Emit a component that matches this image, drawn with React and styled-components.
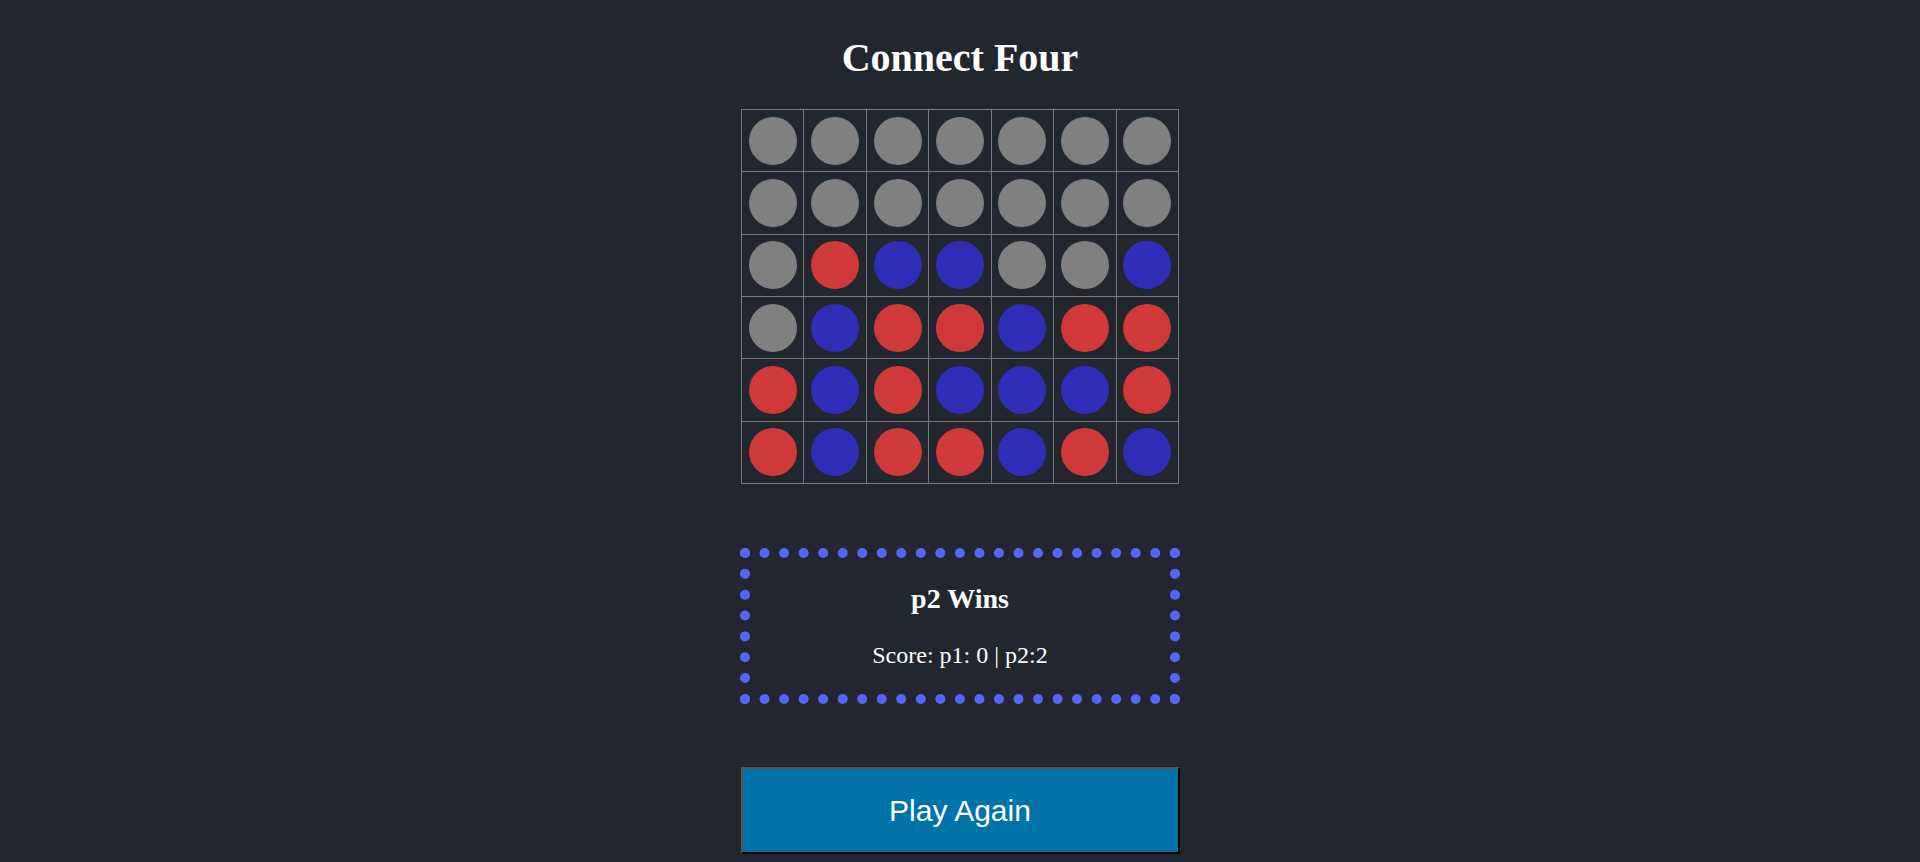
import React from 'react'
import styled, { createGlobalStyle } from 'styled-components'

const GlobalStyle = createGlobalStyle`
  html, body {
    margin: 0;
    padding: 0;
    background: #22262f;
  }
  body {
    font-family: "Liberation Serif", "Times New Roman", serif;
    color: #ffffff;
  }
`

const Page = styled.div`
  display: flex;
  flex-direction: column;
  align-items: center;
  padding-top: 35px;
  min-height: 827px;
`

const Title = styled.h1`
  margin: 0;
  font-size: 40px;
  line-height: 46px;
  font-weight: bold;
`

const Board = styled.div`
  margin-top: 28px;
  width: 438px;
  height: 375px;
  box-sizing: border-box;
  border: 1px solid #7a7a7a;
  background: #7a7a7a;
  display: grid;
  grid-template-columns: repeat(7, 1fr);
  grid-template-rows: repeat(6, 1fr);
  gap: 1px;
`

const Cell = styled.div`
  background: #22262f;
  display: flex;
  align-items: center;
  justify-content: center;
`

const colors = {
  g: '#808080',
  r: '#d13a3a',
  b: '#2f2eb9',
}

const Disc = styled.div`
  width: 48px;
  height: 48px;
  border-radius: 50%;
  background: ${p => colors[p.$c]};
`

const ResultBox = styled.div`
  margin-top: 64px;
  width: 440px;
  box-sizing: border-box;
  border: 10px dotted #5566ff;
  padding: 25px 0 25px;
  text-align: center;
`

const Winner = styled.h3`
  margin: 0;
  font-size: 28px;
  line-height: 31px;
  font-weight: bold;
`

const Score = styled.p`
  margin: 27px 0 0;
  font-size: 24px;
  line-height: 28px;
`

const PlayButton = styled.button`
  margin-top: 63px;
  width: 439px;
  height: 87px;
  box-sizing: border-box;
  background: #0074a8;
  color: #ffffff;
  border: 2px solid;
  border-color: #555555 #000000 #000000 #555555;
  font-family: "Liberation Sans", Arial, sans-serif;
  font-size: 30px;
  cursor: pointer;
  padding: 0;
`

const grid = [
  'ggggggg',
  'ggggggg',
  'grbbggb',
  'gbrrbrr',
  'rbrbbbr',
  'rbrrbrb',
]

export default function App() {
  return (
    <>
      <GlobalStyle />
      <Page>
        <Title>Connect Four</Title>
        <Board>
          {grid.map((row, r) =>
            row.split('').map((c, i) => (
              <Cell key={`${r}-${i}`}>
                <Disc $c={c} />
              </Cell>
            ))
          )}
        </Board>
        <ResultBox>
          <Winner>p2 Wins</Winner>
          <Score>Score: p1: 0 | p2:2</Score>
        </ResultBox>
        <PlayButton>Play Again</PlayButton>
      </Page>
    </>
  )
}
